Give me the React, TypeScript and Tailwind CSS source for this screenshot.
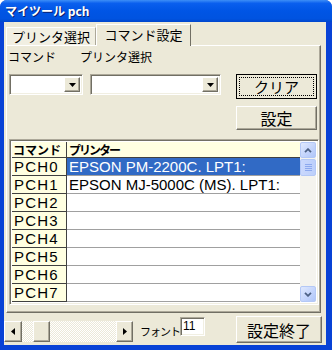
import React from "react";

const raised =
  "bg-[#ECE9D8] border border-t-white border-l-white border-r-[#716F64] border-b-[#716F64] shadow-[inset_-1px_-1px_0_#ACA899]";
const sunken =
  "bg-white border border-t-[#ACA899] border-l-[#ACA899] border-r-white border-b-white shadow-[inset_1px_1px_0_#716F64,inset_-1px_-1px_0_#F1EFE2]";

function DownTri() {
  return (
    <svg width="7" height="4" viewBox="0 0 7 4">
      <path d="M0 0h7L3.5 4z" fill="#000" />
    </svg>
  );
}

function Combo({ w }: { w: string }) {
  return (
    <div className={`${sunken} ${w} h-[21px] flex justify-end p-[2px]`}>
      <div className={`${raised} w-[16px] h-full flex items-center justify-center`}>
        <DownTri />
      </div>
    </div>
  );
}

function XPBtn({ dir }: { dir: "up" | "down" }) {
  return (
    <div className="h-[16px] w-full rounded-[2px] border border-[#B4C8F6] bg-[linear-gradient(135deg,#E0E9FE_0%,#C2D3FC_60%,#B0C6F8_100%)] flex items-center justify-center">
      <svg width="8" height="5" viewBox="0 0 8 5">
        {dir === "up" ? (
          <path d="M1 4.2L4 1.2L7 4.2" stroke="#4D6185" strokeWidth="1.8" fill="none" />
        ) : (
          <path d="M1 0.8L4 3.8L7 0.8" stroke="#4D6185" strokeWidth="1.8" fill="none" />
        )}
      </svg>
    </div>
  );
}

const printers = [
  "EPSON PM-2200C. LPT1:",
  "EPSON MJ-5000C (MS). LPT1:",
  "",
  "",
  "",
  "",
  "",
  "",
];

export default function App() {
  return (
    <div className="w-[332px] h-[350px] bg-[#0842D6] flex flex-col overflow-hidden rounded-t-[7px] font-['Noto_Sans_CJK_JP',sans-serif] text-black">
      {/* title bar */}
      <div className="h-[22px] shrink-0 flex items-center pl-[5px] bg-[linear-gradient(180deg,#3D8FF7_0%,#0A5FEE_15%,#0055E5_50%,#0053E0_85%,#0046CC_100%)]">
        <span className="text-white font-bold text-[12px] leading-none [text-shadow:1px_1px_0_#0A1E6E]">
          マイツール pch
        </span>
      </div>

      {/* body */}
      <div className="flex-1 ml-[4px] mr-[6px] mb-[5px] bg-[#ECE9D8] flex flex-col">
        {/* tab strip */}
        <div className="h-[23px] shrink-0 flex items-end pl-[2px]">
          <div className="h-[18px] w-[90px] bg-[#F1EFE2] border-t border-l border-white border-r border-r-[#ACA899] flex items-center justify-center text-[13px] leading-none">
            プリンタ選択
          </div>
          <div className="relative z-10 -mb-[1px] h-[22px] w-[95px] bg-[#ECE9D8] border-t border-l border-white border-r border-r-[#716F64] flex items-center justify-center text-[13px] leading-none pb-[2px]">
            コマンド設定
          </div>
        </div>

        {/* panel */}
        <div className="ml-[2px] w-[315px] h-[268px] shrink-0 border border-t-white border-l-white border-r-[#716F64] border-b-[#716F64] shadow-[inset_-1px_-1px_0_#ACA899] flex flex-col">
          <div className="h-[93px] shrink-0 flex">
            <div className="pl-[1px] flex flex-col">
              <div className="mt-[3px] h-[16px] flex text-[12px] leading-[16px]">
                <span className="w-[72px]">コマンド</span>
                <span>プリンタ選択</span>
              </div>
              <div className="mt-[9px] pl-[1px] flex gap-[7px]">
                <Combo w="w-[74px]" />
                <Combo w="w-[131px]" />
              </div>
            </div>
            <div className="ml-auto mr-[3px] pt-[28px] flex flex-col gap-[7px]">
              <div className="w-[81px] h-[25px] border border-black p-[2px] bg-[#ECE9D8]">
                <div className="h-full w-full outline-1 outline-dotted outline-black -outline-offset-1 flex items-center justify-center text-[15px] leading-none">
                  クリア
                </div>
              </div>
              <div className={`${raised} w-[81px] h-[24px] flex items-center justify-center text-[16px] leading-none`}>
                設定
              </div>
            </div>
          </div>

          {/* grid */}
          <div className={`${sunken} ml-[2px] w-[310px] h-[166px] p-[2px] flex`}>
            <div className="w-[290px] h-full bg-white flex flex-col">
              <div className="h-[16px] flex bg-[#FFFFE1] border-b border-[#404040] font-bold text-[12px] leading-[15px]">
                <div className="w-[55px] border-r border-[#404040] pl-[1px]">コマンド</div>
                <div className="pl-[2px] tracking-[-2px]">プリンター</div>
              </div>
              {printers.map((p, i) => (
                <div key={i} className="h-[18px] flex font-['Liberation_Sans',sans-serif] text-[15px] leading-[17px]">
                  <div className="w-[55px] bg-[#FFFFE1] border-r border-b border-[#404040] pl-[2px] tracking-[1.2px]">
                    PCH{i}
                  </div>
                  <div
                    className={`flex-1 border-b border-[#A0A0A0] pl-[2px] whitespace-nowrap overflow-hidden ${
                      i === 0 ? "bg-[#316AC5] text-white" : ""
                    }`}
                  >
                    {p}
                  </div>
                </div>
              ))}
            </div>
            <div className="w-[16px] h-full bg-[#F4F3EE] flex flex-col">
              <XPBtn dir="up" />
              <div className="mt-[1px] h-[17px] rounded-[2px] border border-[#B4C8F6] bg-[linear-gradient(90deg,#CAD8FD_0%,#BCCFFB_100%)] flex flex-col items-center justify-center gap-[1px]">
                <div className="w-[7px] h-[1px] bg-[#8CA8EE]" />
                <div className="w-[7px] h-[1px] bg-[#8CA8EE]" />
                <div className="w-[7px] h-[1px] bg-[#8CA8EE]" />
                <div className="w-[7px] h-[1px] bg-[#8CA8EE]" />
              </div>
              <div className="flex-1" />
              <XPBtn dir="down" />
            </div>
          </div>
        </div>

        {/* bottom row */}
        <div className="flex-1 flex items-start">
          <div className="mt-[8px] w-[129px] h-[21px] flex bg-[repeating-conic-gradient(#FFFFFF_0%_25%,#ECE9D8_0%_50%)] bg-[length:2px_2px]">
            <div className={`${raised} w-[18px] h-full flex items-center justify-center`}>
              <svg width="4" height="7" viewBox="0 0 4 7">
                <path d="M4 0v7L0 3.5z" fill="#000" />
              </svg>
            </div>
            <div className="w-[11px]" />
            <div className={`${raised} w-[17px] h-full`} />
            <div className="flex-1" />
            <div className={`${raised} w-[17px] h-full flex items-center justify-center`}>
              <svg width="4" height="7" viewBox="0 0 4 7">
                <path d="M0 0v7L4 3.5z" fill="#000" />
              </svg>
            </div>
          </div>
          <div className="ml-[7px] mt-[10px] w-[40px] whitespace-nowrap text-[11px] tracking-[-1px] leading-[16px]">フォント</div>
          <div className={`${sunken} mt-[4px] w-[25px] h-[19px] pl-[2px] text-[12px] leading-[16px] font-['Liberation_Sans',sans-serif]`}>
            11
          </div>
          <div className={`${raised} ml-[31px] mt-[3px] w-[86px] h-[27px] flex items-center justify-center text-[16px] leading-none`}>
            設定終了
          </div>
        </div>
      </div>
    </div>
  );
}
